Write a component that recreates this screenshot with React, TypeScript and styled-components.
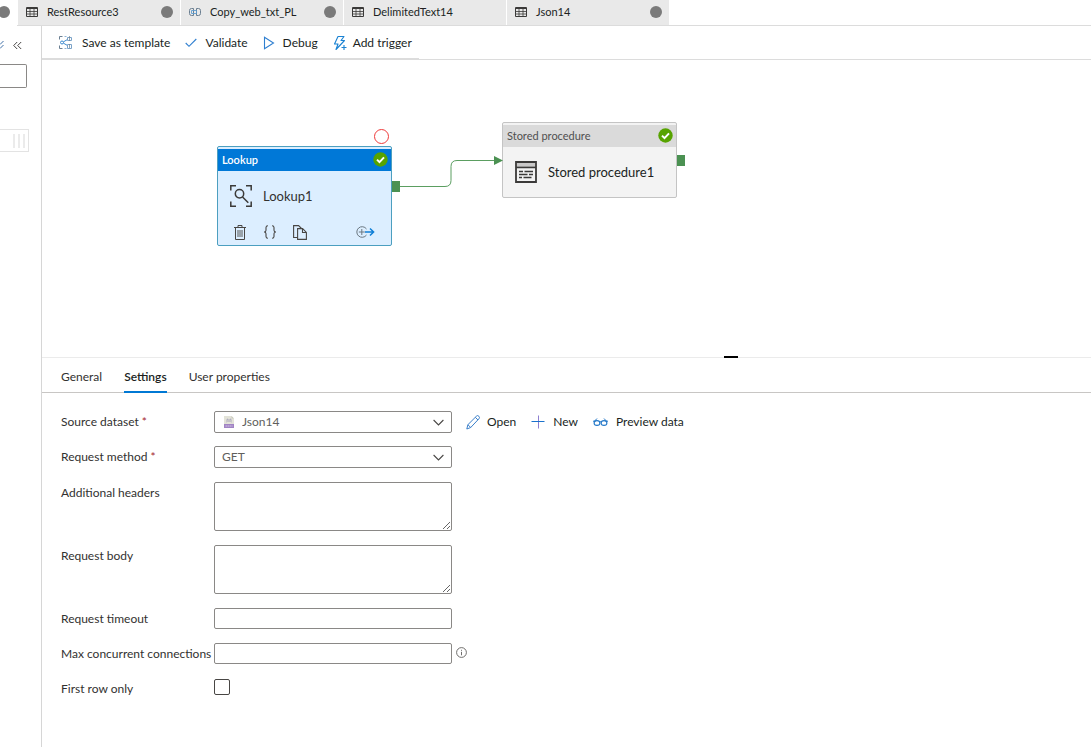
import React from "react";
import styled, { createGlobalStyle, css } from "styled-components";

const GlobalStyle = createGlobalStyle`
  * { box-sizing: border-box; }
  body {
    margin: 0;
    background: #fff;
    color: #323130;
    font-family: Lato, "Open Sans", sans-serif;
    font-size: 12px;
    line-height: 16px;
  }
  button, input, select, textarea { font: inherit; color: inherit; }
  button { background: none; border: 0; padding: 0; cursor: pointer; }
  svg { display: block; flex: none; }
`;

const Page = styled.div`
  display: flex;
  flex-direction: column;
  min-height: 100vh;
  overflow: hidden;
`;

const TabStrip = styled.nav`
  display: flex;
  gap: 1px;
  height: 26px;
  border-bottom: 1px solid #dcdcdc;
`;

const TabStub = styled.div`
  display: flex;
  align-items: center;
  width: 17px;
  height: 26px;
  padding-bottom: 3px;
  background: #fff;
`;

const FileTab = styled.button`
  display: flex;
  align-items: center;
  width: 162px;
  height: 25px;
  padding: 0 7px 1px 8px;
  gap: 9px;
  background: #e9e9e9;
  color: #201f1e;
  font-size: 11px;
  text-align: left;
`;

const FileName = styled.span`
  flex: 1;
`;

const UnsavedDot = styled.span<{ $cut?: boolean }>`
  width: 12px;
  height: 12px;
  border-radius: 6px;
  background: #7a7a7a;
  ${(p) => p.$cut && css`margin-left: -2px;`}
`;

const Workspace = styled.div`
  display: flex;
  flex: 1;
`;

const Sidebar = styled.aside`
  display: flex;
  flex-direction: column;
  flex: none;
  width: 42px;
  border-right: 1px solid #d6d6d6;
`;

const CollapseRow = styled.div`
  display: flex;
  align-items: center;
  height: 38px;
  gap: 9px;
`;

const FilterInput = styled.input`
  width: 27px;
  height: 24px;
  padding: 0;
  border: 1px solid #8a8886;
  border-left: 0;
  border-radius: 0 2px 2px 0;
`;

const ResourceRow = styled.div`
  display: flex;
  align-items: center;
  justify-content: flex-end;
  gap: 3px;
  width: 29px;
  height: 23px;
  margin-top: 41px;
  padding-right: 3px;
  border: 1px solid #e3e3e3;
  border-left: 0;
`;

const Grip = styled.span`
  width: 2px;
  height: 14px;
  background: #ebebeb;
`;

const Main = styled.main`
  display: flex;
  flex-direction: column;
  flex: 1;
  min-width: 0;
`;

const ToolbarArea = styled.div`
  display: flex;
  height: 34px;
  border-bottom: 1px solid #dcdcdc;
`;

const Toolbar = styled.div`
  display: flex;
  align-items: center;
  gap: 15px;
  height: 33px;
  padding: 1px 7px 0 16px;
  border-bottom: 1px solid #dcdcdc;
`;

const Command = styled.button<{ $gap: number }>`
  display: flex;
  align-items: center;
  gap: ${(p) => p.$gap}px;
  color: #201f1e;
  white-space: nowrap;
`;

const Canvas = styled.section`
  position: relative;
  min-height: 298px;
  border-bottom: 1px solid #ebebeb;
`;

const Wire = styled.svg`
  position: absolute;
  left: 350px;
  top: 90px;
`;

const Breakpoint = styled.span`
  position: absolute;
  left: 332px;
  top: 69px;
  width: 15px;
  height: 15px;
  border: 1px solid #ef3b3b;
  border-radius: 8px;
`;

const Node = styled.article<{ $x: number; $y: number; $active?: boolean }>`
  position: absolute;
  left: ${(p) => p.$x}px;
  top: ${(p) => p.$y}px;
  width: 175px;
  padding-top: 2px;
  border: 1px solid ${(p) => (p.$active ? "#4c9fc0" : "#c4c4c4")};
  border-radius: 2px;
  background: ${(p) => (p.$active ? "#dceeff" : "#f3f3f3")};
  color: ${(p) => (p.$active ? "#323130" : "#201f1e")};
`;

const NodeHeader = styled.header<{ $active?: boolean }>`
  display: flex;
  align-items: center;
  justify-content: space-between;
  height: 22px;
  padding: 0 3px 1px 4px;
  font-size: 11px;
  background: ${(p) => (p.$active ? "#0078d7" : "#dadada")};
  color: ${(p) => (p.$active ? "#fff" : "#505050")};
  font-weight: ${(p) => (p.$active ? 600 : 400)};
`;

const NodeBody = styled.div`
  display: flex;
  align-items: center;
  gap: 11px;
  height: 50px;
  padding-left: 12px;
  font-size: 13px;
`;

const NodeActions = styled.div`
  display: flex;
  align-items: center;
  gap: 16px;
  height: 24px;
  padding: 0 16px 2px 15px;
`;

const NodeAction = styled.button<{ $end?: boolean }>`
  ${(p) => p.$end && css`margin-left: auto;`}
`;

const Port = styled.span<{ $top: number }>`
  position: absolute;
  right: -9px;
  top: ${(p) => p.$top}px;
  width: 8px;
  height: 11px;
  background: #4b9152;
`;

const ResizeHandle = styled.span`
  position: absolute;
  left: 65%;
  bottom: -1px;
  width: 14px;
  height: 2px;
  background: #000;
`;

const PanelTabs = styled.div`
  display: flex;
  gap: 22px;
  height: 35px;
  padding-left: 19px;
  border-bottom: 1px solid #c8c6c4;
`;

const PanelTab = styled.button<{ $selected?: boolean }>`
  height: 35px;
  padding-top: 5px;
  border-bottom: 2px solid ${(p) => (p.$selected ? "#0078d4" : "transparent")};
  ${(p) => p.$selected && css`color: #201f1e; font-weight: 600;`}
`;

const Form = styled.form`
  display: flex;
  flex-direction: column;
  gap: 14px;
  padding: 18px 19px;
`;

const FieldGroup = styled.div<{ $gap: number }>`
  display: flex;
  flex-direction: column;
  gap: ${(p) => p.$gap}px;
`;

const Field = styled.div`
  display: flex;
  align-items: flex-start;
`;

const FieldLabel = styled.label`
  flex: none;
  width: 153px;
  padding-top: 3px;
  white-space: nowrap;
`;

const Required = styled.span`
  color: #a4262c;
`;

const controlFrame = css`
  width: 238px;
  border: 1px solid #8a8886;
  border-radius: 2px;
  background: #fff;
  outline: none;
`;

const SelectFrame = styled.div`
  position: relative;
`;

const Select = styled.select<{ $icon?: boolean }>`
  ${controlFrame}
  display: block;
  appearance: none;
  height: 22px;
  padding: 0 28px 0 ${(p) => (p.$icon ? 27 : 7)}px;
  color: #605e5c;
`;

const SelectIcon = styled.span<{ $side: "left" | "right" }>`
  position: absolute;
  top: 5px;
  ${(p) => (p.$side === "left" ? "left: 10px;" : "right: 8px;")}
  pointer-events: none;
`;

const TextArea = styled.textarea`
  ${controlFrame}
  display: block;
  height: 49px;
`;

const TextInput = styled.input`
  ${controlFrame}
  height: 21px;
`;

const CheckBox = styled.input`
  appearance: none;
  width: 16px;
  height: 16px;
  margin: 1px 0 0;
  border: 1px solid #484644;
  border-radius: 2px;
`;

const DatasetActions = styled.div`
  display: flex;
  align-items: center;
  gap: 15px;
  height: 22px;
  margin-left: 14px;
`;

const InfoButton = styled.button`
  margin: 4px 0 0 4px;
`;

const TableIcon = () => (
  <svg width="12" height="12" viewBox="0 0 12 12" fill="none" stroke="#3b3a39">
    <path d="M0.5 1.5h11v9h-11z" />
    <path d="M1 2.5h10" />
    <path d="M1 5.5h10M1 8h10M4 3v8M8 3v8" strokeWidth="0.8" />
  </svg>
);

const CopyIcon = () => (
  <svg width="12" height="12" viewBox="0 0 12 12" fill="none">
    <path d="M4.500 2.500H2.500a2 2 0 0 0-2 2v3a2 2 0 0 0 2 2h2z" stroke="#6b7f91" />
    <path d="M7.500 2.500h2a2 2 0 0 1 2 2v3a2 2 0 0 1-2 2h-2z" stroke="#6b7f91" />
    <path d="M2.500 4.500h5v3h-5z" stroke="#5f9dd0" strokeWidth="0.900" />
  </svg>
);

const TemplateIcon = () => (
  <svg width="15" height="15" viewBox="0 0 15 15" fill="none" stroke="#5b9bd5">
    <path d="M4.500 1.500H1.500V4.500M1.500 10.500V13.500H4.500" stroke="#6a7f92" />
    <path d="M6.500 1.500h2M6.500 13.500h2" stroke="#8fb4d6" />
    <circle cx="4" cy="7.500" r="1.500" stroke="#3b8ad0" />
    <path d="M5.500 6.800 9.500 4.500M5.500 8.200l4 2.300" stroke="#3b8ad0" />
    <path d="M9.500 2.500h4v3h-4zM9.500 9.500h4v4h-4z" stroke="#7ba3c8" />
    <path d="M11.500 1v5M11.500 9v4" stroke="#6a7f92" strokeWidth="0.700" />
  </svg>
);

const ValidateIcon = () => (
  <svg width="12" height="12" viewBox="0 0 12 12" fill="none" stroke="#2f7fd0" strokeWidth="1.100">
    <path d="M0.700 6l3.300 3.300L11.300 2" />
  </svg>
);

const DebugIcon = () => (
  <svg width="12" height="14" viewBox="0 0 12 14" fill="none" stroke="#2f7fd0" strokeWidth="1.100">
    <path d="M1.500 1.200v11.600L10.500 7z" />
  </svg>
);

const TriggerIcon = () => (
  <svg width="14" height="16" viewBox="0 0 14 16" fill="none" stroke="#1a82d2" strokeWidth="1.100">
    <path d="M5 1.500h6L8 5.500h3.500L3 14.500l2-5.500H1.500z" strokeLinejoin="round" />
    <path d="M11 10v5M8.500 12.500h5" />
  </svg>
);

const CheckBadge = () => (
  <svg width="15" height="15" viewBox="0 0 15 15">
    <circle cx="7.500" cy="7.500" r="7.200" fill="#57a300" />
    <path d="M4 7.600l2.500 2.500L11 5.400" fill="none" stroke="#fff" strokeWidth="2" />
  </svg>
);

const LookupIcon = () => (
  <svg width="22" height="22" viewBox="0 0 22 22" fill="none" stroke="#3b3a39" strokeWidth="1.500">
    <path d="M0.800 5.500V0.800H6M16 0.800h5.200V5.500M0.800 16.500v4.700H6M16 21.200h5.200V16.500" />
    <circle cx="9.500" cy="8.800" r="4.200" />
    <path d="M12.500 12l5.800 5.800" />
  </svg>
);

const ProcedureIcon = () => (
  <svg width="22" height="22" viewBox="0 0 22 22" fill="none" stroke="#3b3a39">
    <path d="M1.600 3.500h18.800" stroke="#c9c8c8" strokeWidth="3" />
    <path d="M1 1h20v20H1zM1 6.300h20" strokeWidth="1.800" />
    <path d="M4 10.500h4M9.500 10.500h8.500M4 13.500h8.500M14 13.500h4M4 16.500h3M8.500 16.500h8" strokeWidth="1.400" />
  </svg>
);

const TrashIcon = () => (
  <svg width="14" height="15" viewBox="0 0 14 15" fill="none" stroke="#484644">
    <path d="M1 2.500h12M5 2.500v-2h4v2M2.500 2.500v12h9v-12" />
    <path d="M5 5v7M7 5v7M9 5v7" strokeWidth="0.900" />
  </svg>
);

const BracesIcon = () => (
  <svg width="14" height="14" viewBox="0 0 14 14" fill="none" stroke="#484644" strokeWidth="1.100">
    <path d="M5 0.700C3.500 0.700 3 1.300 3 2.500v2.700C3 6.300 2.500 7 1 7c1.500 0 2 .7 2 1.800v2.700c0 1.200.5 1.800 2 1.800" />
    <path d="M9 0.700c1.500 0 2 .6 2 1.800v2.700c0 1.100.5 1.800 2 1.800-1.500 0-2 .7-2 1.800v2.700c0 1.200-.5 1.800-2 1.800" />
  </svg>
);

const CloneIcon = () => (
  <svg width="14" height="15" viewBox="0 0 14 15" fill="none" stroke="#484644" strokeWidth="1.100">
    <path d="M4.500 12.500H0.600V0.600h5l2.900 2.900" />
    <path d="M4.600 3.600h5l3.800 3.800v7H4.600zM9.500 3.800v3.700h3.700" />
  </svg>
);

const AddOutputIcon = () => (
  <svg width="19" height="12" viewBox="0 0 19 12" fill="none">
    <path d="M10.500 3a5.300 5.300 0 1 0 0 6M2.800 6h6M5.800 3v6" stroke="#6b7780" />
    <path d="M9 6h8.500M14 2.500L17.600 6 14 9.500" stroke="#0f7fd6" strokeWidth="1.500" />
  </svg>
);

const JsonIcon = () => (
  <svg width="10" height="12" viewBox="0 0 10 12">
    <path d="M0 0h7.500L10 2.500V8H0z" fill="#e3e3d8" />
    <path d="M7.500 0v2.500H10z" fill="#c8c8be" />
    <path d="M4 3Q2.500 3 3 4.500T2.500 6M6 3q1.500 0 1 1.500T7.500 6M5 3v3" fill="none" stroke="#9a94b5" strokeWidth="0.800" />
    <path d="M0 8h10v4H0z" fill="#a184c4" />
    <path d="M1.500 10h7" stroke="#d9cbe9" strokeDasharray="1.400 0.600" />
  </svg>
);

const ChevronIcon = () => (
  <svg width="11" height="12" viewBox="0 0 11 12" fill="none" stroke="#484644" strokeWidth="1.100">
    <path d="M0.600 4l4.900 4.900L10.400 4" />
  </svg>
);

const PencilIcon = () => (
  <svg width="14" height="15" viewBox="0 0 14 15" fill="none" stroke="#3a7fca">
    <path d="M0.800 14l1.100-4.300L10.300 1.300a1.700 1.700 0 0 1 2.600 0 1.800 1.800 0 0 1 0 2.500L4.700 12.500z" />
    <path d="M9.300 2.300l2.700 2.700M1.900 9.700l2.800 2.800" />
  </svg>
);

const PlusIcon = () => (
  <svg width="14" height="14" viewBox="0 0 14 14" fill="none">
    <path d="M7.500 0.500v13" stroke="#8d7fd0" />
    <path d="M0.500 6.500h13" stroke="#1a72cc" />
  </svg>
);

const GlassesIcon = () => (
  <svg width="15" height="10" viewBox="0 0 15 10" fill="none" stroke="#2478c8" strokeWidth="1.100">
    <ellipse cx="4" cy="6" rx="2.900" ry="2.400" />
    <ellipse cx="11" cy="6" rx="2.900" ry="2.400" />
    <path d="M6.500 5q1-.8 2 0M0 4.200h2.500M4 1.500L1.500 4.200M15 4.200h-2.500M11 1.500l2.500 2.700" strokeWidth="1" />
  </svg>
);

const InfoIcon = () => (
  <svg width="11" height="11" viewBox="0 0 11 11" fill="none" stroke="#605e5c" strokeWidth="0.900">
    <circle cx="5.500" cy="5.500" r="4.900" />
    <path d="M5.500 4.800v3.500M5.500 2.800v1" />
  </svg>
);

const ExpandIcon = () => (
  <svg width="4" height="10" viewBox="0 0 4 10" fill="none" stroke="#3f6fa6">
    <path d="M0 4.500l3.500-3.500M0 8.500L3.500 5" />
  </svg>
);

const CollapseIcon = () => (
  <svg width="9" height="9" viewBox="0 0 9 9" fill="none" stroke="#484644">
    <path d="M4.200 1L0.700 4.500l3.500 3.500M8.200 1L4.700 4.500l3.500 3.500" />
  </svg>
);

const files = [
  { name: "RestResource3", icon: <TableIcon />, unsaved: true },
  { name: "Copy_web_txt_PL", icon: <CopyIcon />, unsaved: true },
  { name: "DelimitedText14", icon: <TableIcon />, unsaved: false },
  { name: "Json14", icon: <TableIcon />, unsaved: true },
];

export default function App() {
  return (
    <Page>
      <GlobalStyle />
      <TabStrip>
        <TabStub>
          <UnsavedDot $cut />
        </TabStub>
        {files.map((f) => (
          <FileTab key={f.name} type="button">
            {f.icon}
            <FileName>{f.name}</FileName>
            {f.unsaved && <UnsavedDot />}
          </FileTab>
        ))}
      </TabStrip>
      <Workspace>
        <Sidebar>
          <CollapseRow>
            <button type="button" aria-label="Expand all"><ExpandIcon /></button>
            <button type="button" aria-label="Collapse panel"><CollapseIcon /></button>
          </CollapseRow>
          <FilterInput aria-label="Filter resources" />
          <ResourceRow>
            <Grip />
            <Grip />
            <Grip />
          </ResourceRow>
        </Sidebar>
        <Main>
          <ToolbarArea>
            <Toolbar>
              <Command type="button" $gap={9}><TemplateIcon />Save as template</Command>
              <Command type="button" $gap={8}><ValidateIcon />Validate</Command>
              <Command type="button" $gap={8}><DebugIcon />Debug</Command>
              <Command type="button" $gap={6}><TriggerIcon />Add trigger</Command>
            </Toolbar>
          </ToolbarArea>
          <Canvas>
            <Breakpoint />
            <Node $x={175} $y={86} $active>
              <NodeHeader $active>
                Lookup
                <CheckBadge />
              </NodeHeader>
              <NodeBody>
                <LookupIcon />
                Lookup1
              </NodeBody>
              <NodeActions>
                <NodeAction type="button" aria-label="Delete"><TrashIcon /></NodeAction>
                <NodeAction type="button" aria-label="View code"><BracesIcon /></NodeAction>
                <NodeAction type="button" aria-label="Clone"><CloneIcon /></NodeAction>
                <NodeAction type="button" aria-label="Add output" $end><AddOutputIcon /></NodeAction>
              </NodeActions>
              <Port $top={34} />
            </Node>
            <Node $x={460} $y={62}>
              <NodeHeader>
                Stored procedure
                <CheckBadge />
              </NodeHeader>
              <NodeBody>
                <ProcedureIcon />
                Stored procedure1
              </NodeBody>
              <Port $top={32} />
            </Node>
            <Wire width="112" height="44" viewBox="0 0 112 44" fill="none">
              <path d="M8 36.500h45q6 0 6-6v-14q0-6 6-6h38" stroke="#5b9e61" />
              <path d="M102 6l9 4.500-9 4.500z" fill="#4b9152" />
            </Wire>
            <ResizeHandle />
          </Canvas>
          <PanelTabs>
            <PanelTab type="button">General</PanelTab>
            <PanelTab type="button" $selected>Settings</PanelTab>
            <PanelTab type="button">User properties</PanelTab>
          </PanelTabs>
          <Form>
            <FieldGroup $gap={13}>
              <Field>
                <FieldLabel htmlFor="dataset">Source dataset <Required>*</Required></FieldLabel>
                <SelectFrame>
                  <Select id="dataset" $icon><option>Json14</option></Select>
                  <SelectIcon $side="left"><JsonIcon /></SelectIcon>
                  <SelectIcon $side="right"><ChevronIcon /></SelectIcon>
                </SelectFrame>
                <DatasetActions>
                  <Command type="button" $gap={7}><PencilIcon />Open</Command>
                  <Command type="button" $gap={8}><PlusIcon />New</Command>
                  <Command type="button" $gap={8}><GlassesIcon />Preview data</Command>
                </DatasetActions>
              </Field>
              <Field>
                <FieldLabel htmlFor="method">Request method <Required>*</Required></FieldLabel>
                <SelectFrame>
                  <Select id="method"><option>GET</option></Select>
                  <SelectIcon $side="right"><ChevronIcon /></SelectIcon>
                </SelectFrame>
              </Field>
            </FieldGroup>
            <FieldGroup $gap={14}>
              <Field>
                <FieldLabel htmlFor="headers">Additional headers</FieldLabel>
                <TextArea id="headers" />
              </Field>
              <Field>
                <FieldLabel htmlFor="body">Request body</FieldLabel>
                <TextArea id="body" />
              </Field>
              <Field>
                <FieldLabel htmlFor="timeout">Request timeout</FieldLabel>
                <TextInput id="timeout" />
              </Field>
              <Field>
                <FieldLabel htmlFor="connections">Max concurrent connections</FieldLabel>
                <TextInput id="connections" />
                <InfoButton type="button" aria-label="More information"><InfoIcon /></InfoButton>
              </Field>
              <Field>
                <FieldLabel htmlFor="firstrow">First row only</FieldLabel>
                <CheckBox id="firstrow" type="checkbox" />
              </Field>
            </FieldGroup>
          </Form>
        </Main>
      </Workspace>
    </Page>
  );
}
